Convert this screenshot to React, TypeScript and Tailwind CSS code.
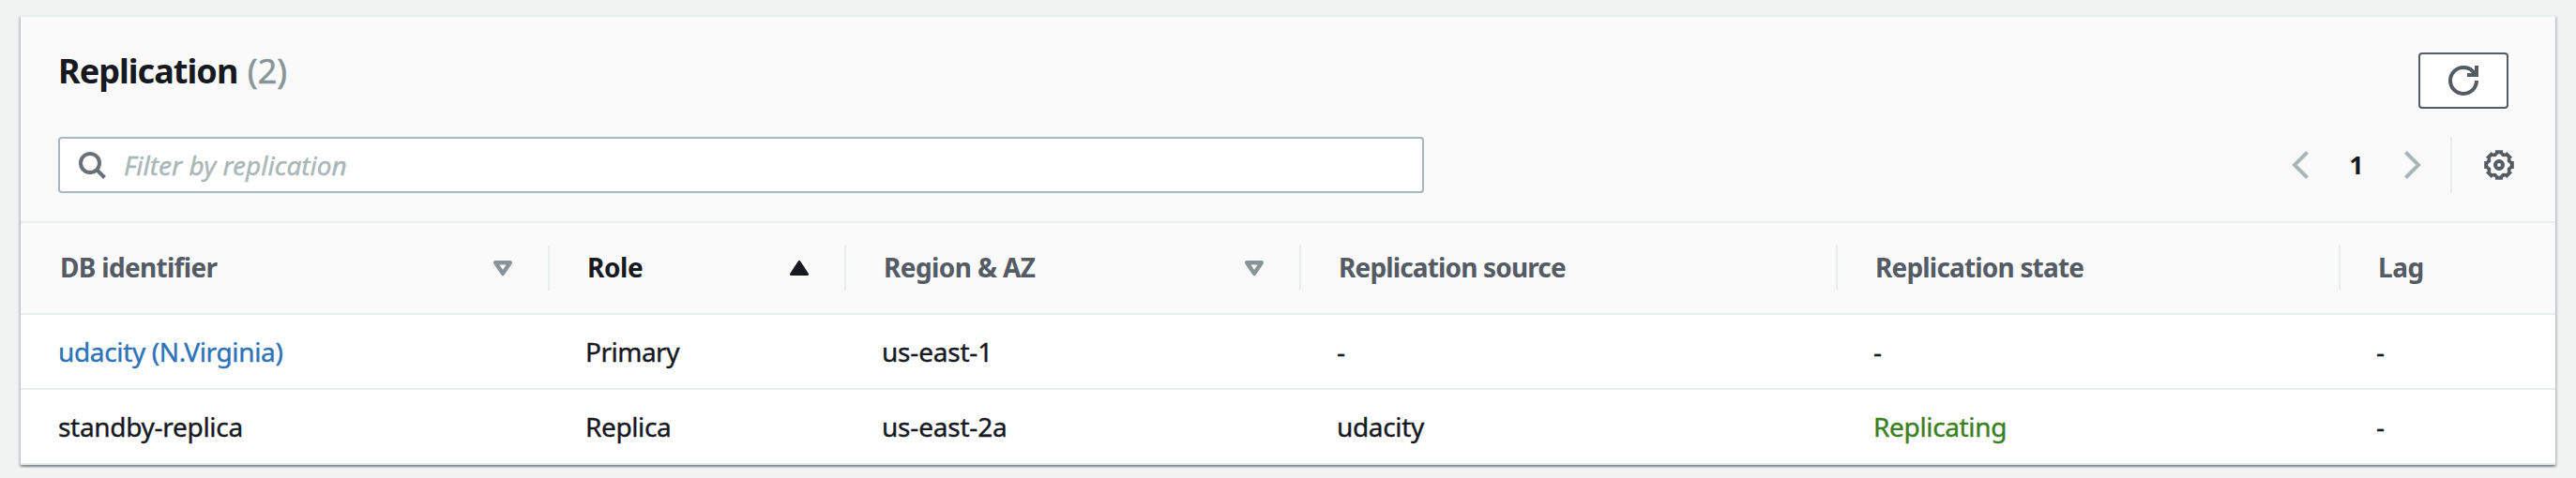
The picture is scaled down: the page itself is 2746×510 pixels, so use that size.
import type { ReactNode } from 'react';

const polar = (r: number, a: number) => `${(8 + r * Math.cos(a)).toFixed(2)} ${(8 + r * Math.sin(a)).toFixed(2)}`;

function gearPath() {
  const outer: string[] = [];
  const inner: string[] = [];
  for (let i = 0; i < 8; i++) {
    const a = (i * Math.PI) / 4;
    outer.push(polar(6.9, a - 0.29), polar(8.15, a - 0.25), polar(8.15, a + 0.25), polar(6.9, a + 0.29));
    inner.push(polar(5.9, a - 0.08), polar(5.9, a + 0.08), polar(4.7, a + Math.PI / 8));
  }
  return `M${outer.join('L')}ZM${inner.join('L')}Z`;
}

function GearIcon() {
  return (
    <svg viewBox="0 0 16 16" className="size-8 text-[#545b64]">
      <path d={gearPath()} fill="currentColor" fillRule="evenodd" />
      <circle cx="8" cy="8" r="2" fill="none" stroke="currentColor" strokeWidth="2" />
    </svg>
  );
}

function RefreshIcon() {
  return (
    <svg viewBox="0 0 16 16" className="size-8 text-[#545b64]" fill="none" stroke="currentColor" strokeWidth="2">
      <path d="M10 5h5V0" />
      <path d="M15 8a6.957 6.957 0 0 1-7 7 6.957 6.957 0 0 1-7-7 6.957 6.957 0 0 1 7-7 6.87 6.87 0 0 1 6.3 4" />
    </svg>
  );
}

function SearchIcon() {
  return (
    <svg viewBox="0 0 32 32" className="size-8 shrink-0 text-[#687078]" fill="none" stroke="currentColor" strokeWidth="4">
      <circle cx="14" cy="14" r="10" />
      <path d="M21 21l8.5 8.5" />
    </svg>
  );
}

function Chevron({ right }: { right?: boolean }) {
  return (
    <svg viewBox="0 0 32 32" className="size-8 text-[#aab7b8]" fill="none" stroke="currentColor" strokeWidth="4">
      <path d={right ? 'M8.4 2.4L22 16L8.4 29.6' : 'M23.6 2.4L10 16L23.6 29.6'} />
    </svg>
  );
}

function SortIcon({ active }: { active?: boolean }) {
  return active ? (
    <svg viewBox="0 0 20 16" className="h-4 w-5 text-[#16191f]">
      <path d="M10 1.5L18.5 14.5H1.5Z" fill="currentColor" stroke="currentColor" strokeWidth="3" strokeLinejoin="round" />
    </svg>
  ) : (
    <svg viewBox="0 0 20 16" className="h-4 w-5 text-[#879596]">
      <path d="M2.2 2.2H17.8L10 13.8Z" fill="none" stroke="currentColor" strokeWidth="4.4" strokeLinejoin="round" />
    </svg>
  );
}

const COLS = 'grid grid-cols-[564px_316px_485px_572px_536px_229px]';

function Head({ children, track, sort, last }: { children: ReactNode; track: string; sort?: 'idle' | 'active'; last?: boolean }) {
  return (
    <div className={`flex h-12 items-center justify-between pl-10 pr-[38px] font-bold ${sort === 'active' ? 'text-[#16191f]' : 'text-[#545b64]'} ${last ? '' : 'border-r-2 border-[#eaeded]'}`}>
      <span className={`pb-[2px] ${track}`}>{children}</span>
      {sort && <SortIcon active={sort === 'active'} />}
    </div>
  );
}

function Cell({ children, track = '' }: { children: ReactNode; track?: string }) {
  return <div className={`pl-[38px] [-webkit-text-stroke:0.4px] ${track}`}>{children}</div>;
}

export default function App() {
  return (
    <div className='h-[510px] w-[2746px] bg-[#f1f3f3] px-[22px] pt-4 font-["Noto_Sans",sans-serif] text-[28px] leading-9 whitespace-nowrap text-[#16191f]'>
      <section className="h-[480px] border-t-2 border-[#eaeded] bg-white shadow-[0_2px_2px_0_rgba(0,28,36,0.3),2px_2px_2px_0_rgba(0,28,36,0.15),-2px_2px_2px_0_rgba(0,28,36,0.15)]">
        <header className="h-[220px] border-b-2 border-[#eaeded] bg-[#fafafa] pl-10">
          <div className="flex h-32 items-start justify-between pr-[50px]">
            <h2 className="pt-[34px] text-[36px] leading-[48px] font-bold tracking-[-0.95px]">
              Replication <span className="pl-[2px] font-normal tracking-[0.1px] text-[#879596] [-webkit-text-stroke:0.5px]">(2)</span>
            </h2>
            <button className="mt-[38px] flex h-[60px] w-24 items-center justify-center rounded-[4px] border-2 border-[#545b64] bg-white">
              <RefreshIcon />
            </button>
          </div>
          <div className="flex items-center justify-between">
            <div className="flex h-[60px] w-[1456px] items-center gap-4 rounded-[4px] border-2 border-[#aab7b8] bg-white pl-[18px]">
              <SearchIcon />
              <span className="pl-[2px] text-[#aab7b8] italic [-webkit-text-stroke:0.4px]">Filter by replication</span>
            </div>
            <div className="flex items-center pr-11">
              <Chevron />
              <span className="w-[88px] text-center text-[27px] font-bold">1</span>
              <Chevron right />
              <div className="ml-[24px] mr-[34px] h-[60px] w-[2px] bg-[#eaeded]" />
              <GearIcon />
            </div>
          </div>
        </header>
        <div className={`${COLS} h-[98px] items-center border-b-2 border-[#eaeded] bg-[#fafafa]`}>
          <Head track="pl-[2px] tracking-[-0.7px]" sort="idle">DB identifier</Head>
          <Head track="tracking-[-0.4px]" sort="active">Role</Head>
          <Head track="tracking-[-0.6px]" sort="idle">Region &amp; AZ</Head>
          <Head track="tracking-[-0.85px]">Replication source</Head>
          <Head track="tracking-[-0.82px]">Replication state</Head>
          <Head track="tracking-[-0.5px]" last>Lag</Head>
        </div>
        <div className={`${COLS} h-20 items-center border-b-2 border-[#eaeded]`}>
          <Cell track="indent-[2px] tracking-[-0.35px] text-[#2e73b8]">udacity (N.Virginia)</Cell>
          <Cell track="tracking-[-0.5px]">Primary</Cell>
          <Cell track="tracking-[-0.2px]">us-east-1</Cell>
          <Cell>-</Cell>
          <Cell>-</Cell>
          <Cell>-</Cell>
        </div>
        <div className={`${COLS} h-20 items-center border-b-2 border-[#eaeded]`}>
          <Cell track="indent-[2px] tracking-[-0.3px]">standby-replica</Cell>
          <Cell track="tracking-[-0.4px]">Replica</Cell>
          <Cell track="tracking-[-0.2px]">us-east-2a</Cell>
          <Cell track="tracking-[-0.35px]">udacity</Cell>
          <Cell track="tracking-[-0.35px] text-[#3b7f1f]">Replicating</Cell>
          <Cell>-</Cell>
        </div>
      </section>
    </div>
  );
}
